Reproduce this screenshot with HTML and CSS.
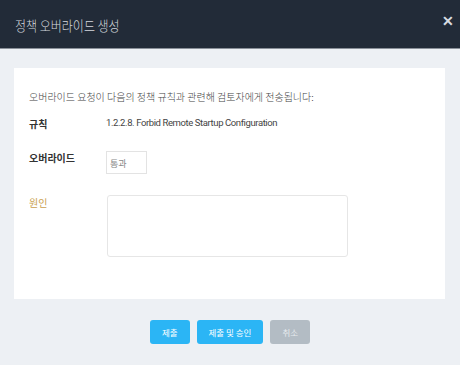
FILE: index.html
```html
<!DOCTYPE html>
<html>
    <head>
        <title>정책 오버라이드 생성</title>
        <link rel="stylesheet" href="styles.css">
    </head>
    <body>
        <div class="modal-header">
            <h1>정책 오버라이드 생성</h1>
            <span class="close">&#x2715;</span>
        </div>
        <div class="modal-body">
            <div class="card">
                <p class="intro">오버라이드 요청이 다음의 정책 규칙과 관련해 검토자에게 전송됩니다:</p>
                <div class="row rule-row">
                    <div class="label">규칙</div>
                    <div class="value">1.2.2.8. Forbid Remote Startup Configuration</div>
                </div>
                <div class="row override-row">
                    <div class="label">오버라이드</div>
                    <div class="select-box">통과</div>
                </div>
                <div class="row reason-row">
                    <div class="label reason">원인</div>
                    <textarea class="reason-box"></textarea>
                </div>
            </div>
        </div>
        <div class="modal-footer">
            <button class="btn primary">제출</button>
            <button class="btn primary">제출 및 승인</button>
            <button class="btn disabled">취소</button>
        </div>
    </body>
</html>
```
FILE: styles.css
```css
body{
    margin: 0;
    width: 460px;
    height: 365px;
    background-color: #edf0f4;
    font-family: Roboto, "Noto Sans CJK KR", sans-serif;
    overflow: hidden;
}

.modal-header{
    height: 48px;
    background-color: #222b38;
    border-bottom: 1px solid #8a9099;
    display: flex;
    align-items: center;
    justify-content: space-between;
    padding: 0 6px 0 15px;
}

.modal-header h1{
    margin: 0;
    font-size: 12px;
    font-weight: 300;
    color: #d5d9de;
    font-family: "Noto Sans CJK KR", sans-serif;
    transform: scaleY(1.15);
}

.close{
    color: #d8dce0;
    font-size: 14px;
    font-weight: bold;
    margin-top: -7px;
}

.modal-body{
    padding: 19px 15px 0 14px;
}

.card{
    height: 231px;
    box-sizing: border-box;
    background-color: white;
    padding: 21px 15px 0 15px;
}

.intro{
    margin: 0 0 12px 0;
    font-size: 10px;
    font-weight: 300;
    color: #444;
    font-family: "Noto Sans CJK KR", sans-serif;
}

.row{
    display: flex;
    align-items: flex-start;
}

.label{
    width: 77px;
    flex-shrink: 0;
    font-size: 10px;
    font-weight: bold;
    color: #333;
    font-family: "Noto Sans CJK KR", sans-serif;
}

.value{
    font-size: 9.5px;
    color: #444;
    letter-spacing: -0.4px;
    margin-top: 1px;
}

.override-row{
    margin-top: 20px;
}

.override-row .label{
    margin-top: -1px;
}

.select-box{
    width: 41px;
    height: 23px;
    box-sizing: border-box;
    border: 1px solid #e3e3e3;
    font-size: 9px;
    color: #888;
    padding: 5px 0 0 3px;
    font-family: "Noto Sans CJK KR", sans-serif;
}

.reason-row{
    margin-top: 21px;
}

.label.reason{
    color: #c9a04e;
    font-weight: normal;
    margin-top: 0;
}

.reason-box{
    width: 241px;
    height: 62px;
    box-sizing: border-box;
    border: 1px solid #e6e6e6;
    border-radius: 3px;
    margin-left: 1px;
    resize: none;
}

.modal-footer{
    display: flex;
    justify-content: center;
    gap: 7px;
    padding-top: 21px;
}

.btn{
    height: 24px;
    border: none;
    border-radius: 3px;
    color: white;
    font-size: 8.5px;
    padding: 0 12px;
    font-family: "Noto Sans CJK KR", sans-serif;
}

.btn.primary{
    background-color: #2bb5f5;
}

.btn.disabled{
    background-color: #b3bcc4;
    color: #e6eaee;
}
```
